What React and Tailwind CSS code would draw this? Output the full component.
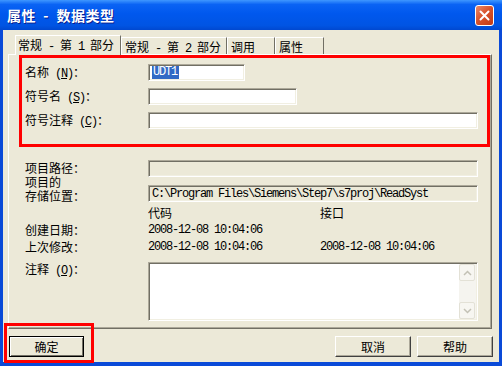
import React from 'react';

const sunken =
  'border border-t-[#aca899] border-l-[#aca899] border-r-white border-b-white shadow-[inset_1px_1px_0_#716f64,inset_-1px_-1px_0_#f1efe2]';

const mono = "font-['Liberation_Mono',monospace] text-[12px] tracking-[-1.2px]";

// half-width latin run, like the bitmap dialog font
function A({ children }) {
  return <span className={`${mono} whitespace-pre`}>{children}</span>;
}

function Label({ children, className = '' }) {
  return <div className={`w-[123px] shrink-0 text-[12px] leading-[14px] ${className}`}>{children}</div>;
}

function Tab({ children, active, w }) {
  return (
    <div
      className={
        active
          ? 'relative z-10 h-[20px] bg-[#ece9d8] border-t border-l border-r border-t-white border-l-white border-r-[#716f64] pl-[2px] pt-[1px] text-[12px] leading-[16px] whitespace-pre'
          : 'h-[18px] border-t border-l border-r border-t-white border-l-white border-r-[#716f64] pl-[3px] pt-[1px] text-[12px] leading-[15px] whitespace-pre'
      }
      style={{ width: w }}
    >
      {children}
    </div>
  );
}

function Btn({ children, def }) {
  return (
    <button
      type="button"
      className={
        def
          ? 'w-[75px] h-[21px] flex items-center justify-center bg-[#ece9d8] border border-black shadow-[inset_1px_1px_0_#fff,inset_-1px_-1px_0_#716f64] text-[12px]'
          : 'w-[76px] h-[21px] flex items-center justify-center bg-[#ece9d8] border border-t-white border-l-white border-r-[#404040] border-b-[#404040] shadow-[inset_-1px_-1px_0_#aca899] text-[12px]'
      }
    >
      {children}
    </button>
  );
}

function ScrollArrow({ up }) {
  return (
    <div className="h-[17px] w-[16px] flex items-center justify-center bg-[#f7f6f1] border border-[#e3e1d6] rounded-[2px]">
      <svg width="9" height="6" viewBox="0 0 9 6">
        <path d={up ? 'M1 5 L4.5 1.5 L8 5' : 'M1 1 L4.5 4.5 L8 1'} fill="none" stroke="#c3c1b5" strokeWidth="1.5" />
      </svg>
    </div>
  );
}

export default function App() {
  return (
    <div className="w-[502px] h-[366px] flex flex-col bg-[#0a4ad8] font-['Noto_Sans_CJK_SC',sans-serif] text-black overflow-hidden">
      {/* title bar */}
      <div className="h-[30px] shrink-0 flex items-center justify-between pl-[7px] pr-[8px] bg-[linear-gradient(to_bottom,#3f97ff_0%,#0a63f4_15%,#0058ee_45%,#0054e3_85%,#0048d0_100%)]">
        <span className="text-white font-bold text-[14px] tracking-[0.5px] whitespace-pre [text-shadow:1px_1px_0_#0a1f8f]">属性  -  数据类型</span>
        <div className="w-[19px] h-[21px] rounded-[3px] border border-white bg-[linear-gradient(135deg,#e98a6b_0%,#d9532d_45%,#c23a14_100%)] flex items-center justify-center">
          <svg width="11" height="11" viewBox="0 0 11 11">
            <path d="M1.5 1.5 L9.5 9.5 M9.5 1.5 L1.5 9.5" stroke="#fff" strokeWidth="2" strokeLinecap="round" />
          </svg>
        </div>
      </div>

      {/* body */}
      <div className="relative flex-1 mx-[3px] mb-[4px] bg-[#ece9d8] pt-[5px] flex flex-col">
        {/* tabs */}
        <div className="h-[20px] ml-[12px] flex items-end">
          <Tab active w={106}>常规<A> - </A>第<A> 1 </A>部分</Tab>
          <Tab w={106}>常规<A> - </A>第<A> 2 </A>部分</Tab>
          <Tab w={48}>调用</Tab>
          <Tab w={49}>属性</Tab>
        </div>

        {/* panel */}
        <div className="-mt-px ml-[5px] w-[484px] h-[275px] border border-t-white border-l-white border-r-[#716f64] border-b-[#716f64] shadow-[inset_-1px_-1px_0_#aca899] flex flex-col">
          <div className="ml-[10px] mr-[1px] h-[92px] border-[3px] border-[#ff0000] pt-[6px] pl-[3px] flex flex-col gap-[7px]">
            <div className="flex items-center h-[17px]">
              <Label>名称<A> (</A><span className={`${mono} underline`}>N</span><A>)</A>：</Label>
              <div className={`w-[97px] h-[17px] bg-white ${sunken} flex items-center pl-[3px]`}>
                <span className={`bg-[#316ac5] text-white ${mono} leading-[13px] pl-[1px] pr-[2px]`}>UDT1</span>
              </div>
            </div>
            <div className="flex items-center h-[17px]">
              <Label>符号名<A> (</A><span className={`${mono} underline`}>S</span><A>)</A>：</Label>
              <div className={`w-[149px] h-[17px] bg-white ${sunken}`} />
            </div>
            <div className="flex items-center h-[17px]">
              <Label>符号注释<A> (</A><span className={`${mono} underline`}>C</span><A>)</A>：</Label>
              <div className={`w-[330px] h-[17px] bg-white ${sunken}`} />
            </div>
          </div>

          <div className="pl-[16px] flex flex-col">
            <div className="mt-[13px] flex items-center h-[17px]">
              <Label className="leading-[12px] -translate-y-[1px]">项目路径：</Label>
              <div className={`w-[330px] h-[17px] ${sunken}`} />
            </div>
            <div className="mt-[1px] flex items-end h-[24px]">
              <Label className="leading-[12px] translate-y-[1px]">项目的<br />存储位置：</Label>
              <div className={`w-[330px] h-[17px] ${sunken} flex items-center pl-[3px] ${mono} whitespace-pre`}>
                C:\Program Files\Siemens\Step7\s7proj\ReadSyst
              </div>
            </div>
            <div className="mt-[4px] flex h-[14px] text-[12px] leading-[14px]">
              <div className="w-[123px]" />
              <div className="w-[172px]">代码</div>
              <div>接口</div>
            </div>
            <div className="mt-[3px] flex h-[14px] text-[12px] leading-[14px]">
              <Label>创建日期：</Label>
              <div className={`w-[172px] ${mono}`}>2008-12-08 10:04:06</div>
            </div>
            <div className="mt-[3px] flex h-[14px] text-[12px] leading-[14px]">
              <Label>上次修改：</Label>
              <div className={`w-[172px] ${mono}`}>2008-12-08 10:04:06</div>
              <div className={mono}>2008-12-08 10:04:06</div>
            </div>
            <div className="mt-[8px] flex">
              <Label>注释<A> (</A><span className={`${mono} underline`}>O</span><A>)</A>：</Label>
              <div className={`w-[330px] h-[59px] bg-white ${sunken} flex justify-end p-[1px]`}>
                <div className="w-[17px] h-full bg-[#f5f4ef] flex flex-col justify-between">
                  <ScrollArrow up />
                  <ScrollArrow />
                </div>
              </div>
            </div>
          </div>
        </div>

        {/* buttons */}
        <div className="mt-[7px] px-[6px] flex justify-between">
          <Btn def>确定</Btn>
          <div className="flex gap-[6px]">
            <Btn>取消</Btn>
            <Btn>帮助</Btn>
          </div>
        </div>

        {/* red annotation around OK */}
        <div className="absolute left-[1px] top-[293px] w-[90px] h-[40px] border-[3px] border-[#ff0000] pointer-events-none" />
      </div>
    </div>
  );
}
